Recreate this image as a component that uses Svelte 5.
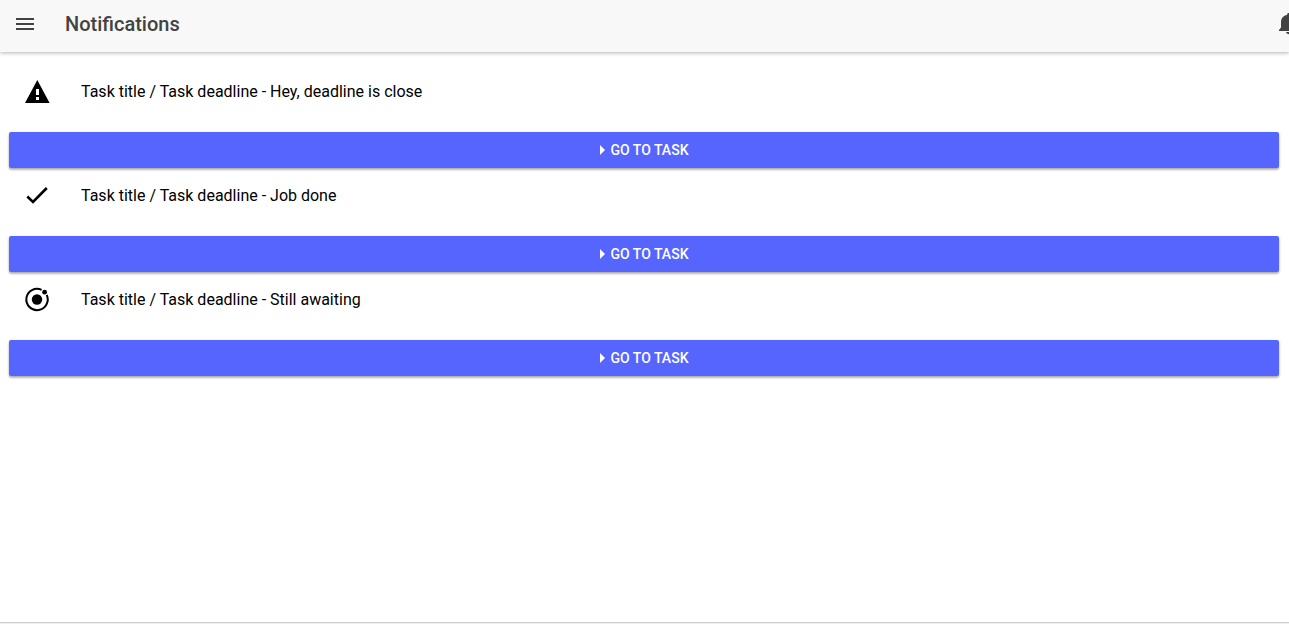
<script>
  const notifications = [
    { icon: 'warning', text: 'Task title / Task deadline - Hey, deadline is close' },
    { icon: 'done', text: 'Task title / Task deadline - Job done' },
    { icon: 'waiting', text: 'Task title / Task deadline - Still awaiting' },
  ];
</script>

<div class="page">
  <header>
    <button class="menu" aria-label="Menu">
      <svg width="18" height="12" viewBox="0 0 18 12"><path d="M0 0h18v2H0zM0 5h18v2H0zM0 10h18v2H0z" /></svg>
    </button>
    <h1>Notifications</h1>
    <button class="bell" aria-label="Alerts">
      <svg width="20" height="22" viewBox="0 0 20 22">
        <path d="M10 0C8.900 0 8.200.5 8.200 1.400v.4C4.400 2.600 2 5.300 2 9v5.500L0 17v1h20v-1l-2-2.500V9c0-3.700-2.400-6.400-6.200-7.200v-.4C11.800.5 11.100 0 10 0zM7 19c.3 1.300 1.500 2.200 3 2.200s2.700-.9 3-2.200z" />
      </svg>
    </button>
  </header>

  <main>
    {#each notifications as item}
      <article>
        <div class="row">
          <svg width="24" height="24" viewBox="0 0 24 24" aria-hidden="true">
            {#if item.icon === 'warning'}
              <path fill-rule="evenodd" d="M12.300 0 24.600 23H0zM11 9v6h3V9zM11 17v3h3v-3z" />
            {:else if item.icon === 'done'}
              <path d="M2.300 12.500 8 18 21.800 4" fill="none" stroke="#000" stroke-width="2.600" />
            {:else}
              <circle cx="12" cy="11.500" r="5.200" />
              <circle cx="19.600" cy="4.200" r="2.400" />
              <path d="M16.600 1.800A10.700 10.700 0 1 0 21.700 6.900" fill="none" stroke="#000" stroke-width="2" />
            {/if}
          </svg>
          <p>{item.text}</p>
        </div>
        <button class="go">
          <svg width="5" height="10" viewBox="0 0 5 10" aria-hidden="true"><path d="M0 0 5 5 0 10z" /></svg>
          Go to task
        </button>
      </article>
    {/each}
  </main>
  <footer></footer>
</div>

<style>
  :global(body) {
    margin: 0;
    background: #fff;
  }
  .page {
    display: flex;
    flex-direction: column;
    min-height: 100vh;
    font-family: Roboto, sans-serif;
    color: #000;
    overflow: hidden;
  }
  svg {
    display: block;
    flex: none;
    fill: currentColor;
    overflow: visible;
  }
  button {
    border: 0;
    padding: 0;
    background: none;
    color: inherit;
    font-family: inherit;
    cursor: pointer;
  }
  header {
    display: flex;
    align-items: center;
    height: 52px;
    padding-left: 16px;
    background: #f8f8f8;
    color: #424242;
    box-shadow: 0 1px 4px rgba(0, 0, 0, 0.3);
  }
  .menu {
    padding: 4px 0;
  }
  .menu svg {
    margin-bottom: 4px;
  }
  h1 {
    flex: 1;
    margin: 0 0 4px 31px;
    font-size: 20px;
    line-height: 24px;
    font-weight: 500;
  }
  .bell {
    margin: 0 -10px 4px 0;
  }
  main {
    flex: 1;
    padding: 12px 10px 12px 9px;
  }
  .row {
    display: flex;
    align-items: center;
    gap: 32px;
    padding: 16px 16px 28px;
  }
  p {
    margin: 0;
    font-size: 16px;
    line-height: 24px;
  }
  .go {
    display: flex;
    align-items: center;
    justify-content: center;
    gap: 6px;
    width: 100%;
    height: 36px;
    border-radius: 2px;
    background: #5765ff;
    color: #fff;
    font-size: 14px;
    font-weight: 500;
    text-transform: uppercase;
    box-shadow: 0 2px 2px rgba(0, 0, 0, 0.2), 0 1px 3px rgba(0, 0, 0, 0.2);
  }
  footer {
    height: 1px;
    border-top: 1px solid #cfcfcf;
    background: #f0f0f0;
  }
</style>
